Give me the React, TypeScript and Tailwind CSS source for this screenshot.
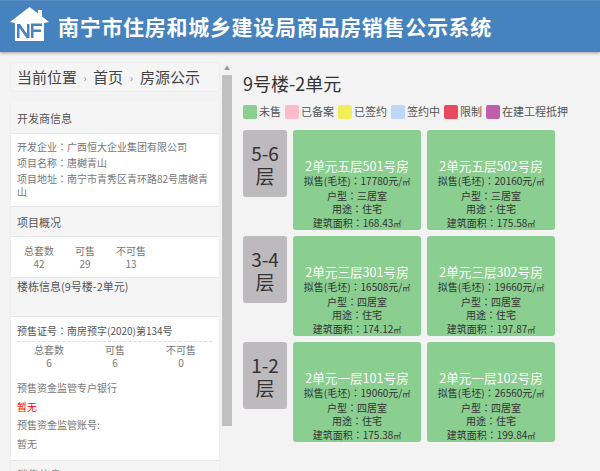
const font = { fontFamily: '"Noto Sans CJK SC", "Liberation Sans", sans-serif' };

function Logo() {
  return (
    <svg width="40" height="36" viewBox="0 0 40 36" className="shrink-0 mb-[3px]">
      <path d="M0 15 L19.500 0 L28 6.500 L28 3 L32 3 L32 9.500 L39 15 L34 16 L34 34 L5 34 L5 16 Z" fill="#fff" />
      <path d="M7 31 V17 H10 L17 27 V17 H19.500 V31 H16.500 L9.500 21 V31 Z" fill="#4682be" />
      <path d="M21 16.500 H32 V19 H23.500 V22.500 H31 V25 H23.500 V31 H21 Z" fill="#4682be" />
    </svg>
  );
}

const legend: [string, string][] = [
  ["#8ace90", "未售"],
  ["#fdbbcb", "已备案"],
  ["#f3ee58", "已签约"],
  ["#bcd7fb", "签约中"],
  ["#e84a5f", "限制"],
  ["#c060ac", "在建工程抵押"],
];

type Unit = { name: string; price: string; type: string; area: string };
const floors: { label: string[]; units: Unit[] }[] = [
  {
    label: ["5-6", "层"],
    units: [
      { name: "2单元五层501号房", price: "17780", type: "三居室", area: "168.43" },
      { name: "2单元五层502号房", price: "20160", type: "三居室", area: "175.58" },
    ],
  },
  {
    label: ["3-4", "层"],
    units: [
      { name: "2单元三层301号房", price: "16508", type: "四居室", area: "174.12" },
      { name: "2单元三层302号房", price: "19660", type: "四居室", area: "197.87" },
    ],
  },
  {
    label: ["1-2", "层"],
    units: [
      { name: "2单元一层101号房", price: "19060", type: "四居室", area: "175.38" },
      { name: "2单元一层102号房", price: "26560", type: "四居室", area: "199.84" },
    ],
  },
];

function Colon() {
  return <span className="font-['Noto_Sans_CJK_TC']">：</span>;
}

function PanelHead({ children, className = "" }: { children: React.ReactNode; className?: string }) {
  return (
    <div className={`bg-[#f5f5f5] border-y border-[#e6e6e6] px-[6px] text-[11px] leading-[16px] text-[#555] ${className}`}>
      {children}
    </div>
  );
}

function Stats({ items, className, cell }: { items: [string, string][]; className: string; cell: string }) {
  return (
    <div className={`flex text-center text-[10px] leading-[13px] text-[#777] ${className}`}>
      {items.map(([a, b]) => (
        <div key={a} className={cell}>
          <div>{a}</div>
          <div>{b}</div>
        </div>
      ))}
    </div>
  );
}

export default function App() {
  return (
    <div className="w-[600px] h-[471px] overflow-hidden bg-[#f3f3f3] flex flex-col" style={font}>
      <header className="h-[52px] shrink-0 bg-[#4682be] border-t border-[#5a90c6] shadow-[0_1px_3px_rgba(0,0,0,0.35)] flex items-center pl-[10px] gap-[8px] z-10">
        <Logo />
        <h1 className="text-[21px] font-bold text-white tracking-[0.7px] whitespace-nowrap">南宁市住房和城乡建设局商品房销售公示系统</h1>
      </header>
      <div className="flex flex-1 min-h-0">
        <div className="w-[232px] shrink-0 flex pl-[10px] pt-[10px] overflow-hidden">
          <div className="w-[210px] shrink-0">
            <div className="h-[30px] bg-[#f5f5f5] rounded-[4px] border border-[#ececec] flex items-center pl-[6px] text-[15px] text-[#444] whitespace-nowrap">
              <span>当前位置</span>
              <span className="w-[16px] text-center text-[10px] text-[#888]">›</span>
              <span>首页</span>
              <span className="w-[17px] text-center text-[10px] text-[#888]">›</span>
              <span>房源公示</span>
            </div>
            <div className="mt-[10px] bg-white rounded-t-[4px] border-x border-[#eee]">
              <PanelHead className="h-[32px] flex items-center border-t-0 rounded-t-[4px]">开发商信息</PanelHead>
              <div className="h-[72px] px-[6px] pt-[6px] text-[10px] leading-[13px] text-[#777] flex flex-col gap-[3px]">
                <div>开发企业<Colon />广西恒大企业集团有限公司</div>
                <div>项目名称<Colon />唐樾青山</div>
                <div>项目地址<Colon />南宁市青秀区青环路82号唐樾青山</div>
              </div>
              <PanelHead className="h-[31px] flex items-center">项目概况</PanelHead>
              <div className="h-[40px] pt-[7px] pl-[5px]">
                <Stats
                  items={[["总套数", "42"], ["可售", "29"], ["不可售", "13"]]}
                  className="gap-[0px]"
                  cell="w-[46px]"
                />
              </div>
              <PanelHead className="h-[40px]">楼栋信息(9号楼-2单元)</PanelHead>
              <div className="h-[142px] px-[6px] text-[10px] leading-[18.500px] text-[#777]">
                <div className="h-[25px] pt-[5px] border-b border-dashed border-[#ddd] text-[#555] mr-[1px]">预售证号<Colon />南房预字(2020)第134号</div>
                <Stats
                  items={[["总套数", "6"], ["可售", "6"], ["不可售", "0"]]}
                  className="pt-[1px] pb-[10px] -mx-[1px]"
                  cell="w-[66px]"
                />
                <div>预售资金监管专户银行</div>
                <div className="text-[#f00]">暂无</div>
                <div>预售资金监管账号:</div>
                <div>暂无</div>
              </div>
              <PanelHead className="h-[20px] mt-[1px] pt-[5px]">
                <span className="text-[#999]">销售信息</span>
              </PanelHead>
            </div>
          </div>
          <div className="w-[10px] ml-[2px] shrink-0 flex flex-col">
            <div className="h-[13px] text-[6px] leading-[12px] text-center text-[#999]">▲</div>
            <div className="h-[351px] bg-[#c0c0c0]" />
          </div>
        </div>
        <main className="flex-1 pl-[11px] pt-[18px] min-w-0">
          <h2 className="text-[18px] leading-[26px] text-[#333]">9号楼-2单元</h2>
          <div className="flex items-center mt-[8px] h-[15px] text-[11px] text-[#555] whitespace-nowrap">
            {legend.map(([c, t]) => (
              <div key={t} className="flex items-center mr-[4px]">
                <span className="w-[14px] h-[14px] rounded-[2px] mr-[2px]" style={{ backgroundColor: c }} />
                <span>{t}</span>
              </div>
            ))}
          </div>
          <div className="flex flex-col gap-[6px] mt-[11px]">
            {floors.map((f) => (
              <div key={f.label[0]} className="flex items-start gap-[6px]">
                <div className="w-[44px] h-[67px] bg-[#bcbabc] rounded-[3px] flex flex-col items-center justify-center text-[19px] leading-[23px] text-[#333]">
                  <span>{f.label[0]}</span>
                  <span>{f.label[1]}</span>
                </div>
                <div className="flex gap-[6px]">
                  {f.units.map((u) => (
                    <div key={u.name} className="w-[128px] h-[100px] bg-[#8ace90] rounded-[3px] flex flex-col items-center justify-end text-[10px] leading-[13.500px] text-[#333]">
                      <div className="text-[12.600px] leading-[16px] text-white">{u.name}</div>
                      <div>拟售(毛坯)<Colon />{u.price}元/<span className="text-[8px]">㎡</span></div>
                      <div>户型<Colon />{u.type}</div>
                      <div>用途<Colon />住宅</div>
                      <div>建筑面积<Colon />{u.area}<span className="text-[8px]">㎡</span></div>
                    </div>
                  ))}
                </div>
              </div>
            ))}
          </div>
        </main>
      </div>
    </div>
  );
}
